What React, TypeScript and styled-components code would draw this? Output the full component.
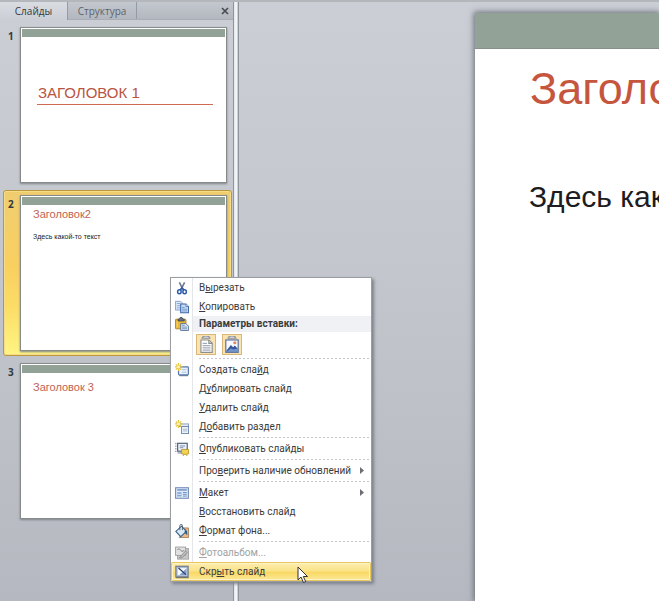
import React from "react";
import styled, { createGlobalStyle } from "styled-components";

const GlobalStyle = createGlobalStyle`
  *, *::before, *::after { box-sizing: border-box; }
  html, body { margin: 0; height: 100%; overflow: hidden; }
  #root { height: 100%; }
  button { font: inherit; color: inherit; margin: 0; padding: 0; border: 0; background: none; text-align: left; }
`;

const UI_FONT = `"Open Sans", "Noto Sans", sans-serif`;
const MENU_FONT = `Roboto, "Noto Sans", sans-serif`;
const SLIDE_FONT = `"Liberation Sans", Arial, sans-serif`;

const Window = styled.div`
  position: relative;
  display: flex;
  min-height: 100vh;
  height: 100vh;
  border-top: 2px solid #b4b8bd;
  background: linear-gradient(#cbced5, #c4c8ce 40%, #b5b8c0);
  font: 10px/14px ${UI_FONT};
  color: #3b3b3b;
  overflow: hidden;
`;

const Sidebar = styled.aside`
  flex: 0 0 233px;
  display: flex;
  flex-direction: column;
`;

const TabBar = styled.div`
  display: flex;
  height: 18px;
  background: linear-gradient(#c3c8cf, #b3b8c0);
  border-bottom: 1px solid #a9aeb6;
`;

const Tab = styled.button<{ $active?: boolean }>`
  width: ${(p) => (p.$active ? 68 : 69)}px;
  height: ${(p) => (p.$active ? 18 : 17)}px;
  text-align: center;
  color: ${(p) => (p.$active ? "#333940" : "#5d636b")};
  background: ${(p) => (p.$active ? "linear-gradient(#d9dde2, #cbced5)" : "none")};
  border-right: 1px solid #959ba4;
`;

const CloseButton = styled.button`
  margin-left: auto;
  width: 17px;
  display: grid;
  place-items: center;
  color: #484d54;
`;

const SlideList = styled.ol`
  list-style: none;
  margin: 0;
  padding: 2px 1px 0 3px;
  display: flex;
  flex-direction: column;
  gap: 2px;
`;

const SlideRow = styled.li<{ $selected?: boolean }>`
  display: flex;
  padding: 4px 4px 4px 0;
  border: 1px solid ${(p) => (p.$selected ? "#bd9740" : "transparent")};
  border-radius: 3px;
  background: ${(p) =>
    p.$selected ? "linear-gradient(#efcd70, #f9cf60 45%, #fbdc66 70%, #fff582)" : "none"};
  box-shadow: ${(p) => (p.$selected ? "inset 0 0 0 1px #f7dc88" : "none")};
`;

const SlideNumber = styled.span`
  flex: 0 0 16px;
  padding: 2px 0 0 4px;
  font-weight: 700;
  color: #333940;
`;

const Thumb = styled.div`
  flex: 1;
  height: 156px;
  padding: 1px;
  background: #fff;
  border: 1px solid #878b88;
  box-shadow: 0 1px 2px #7f848b;
`;

const ThumbBand = styled.div`
  height: 8px;
  background: #92a297;
`;

const ThumbTitle = styled.div`
  margin: 46px 12px 0 15px;
  padding: 0 0 1px 1px;
  font: 15px/20px ${SLIDE_FONT};
  color: #b9543f;
  border-bottom: 1px solid #cf6a55;
`;

const ThumbHeading = styled.div<{ $low?: boolean }>`
  margin: ${(p) => (p.$low ? 7 : 2)}px 11px 0;
  font: 11px/14px ${SLIDE_FONT};
  color: #c06352;
`;

const ThumbText = styled.div`
  margin: 12px 11px 0;
  font: 7px/8px ${SLIDE_FONT};
  color: #222;
`;

const Splitter = styled.div`
  flex: 0 0 6px;
  border: solid #8f959d;
  border-width: 0 1px;
  background: linear-gradient(90deg, #e3e6e9, #f7f8f9 60%, #b9bdc3);
`;

const Workspace = styled.main`
  flex: 1;
  min-width: 0;
  display: flex;
  padding: 11px 0 0 236px;
`;

const Slide = styled.section`
  flex: 1;
  min-width: 0;
  background: #fff;
  box-shadow: 0 0 6px 1px #656b73;
  font-family: ${SLIDE_FONT};
  white-space: nowrap;
`;

const SlideBand = styled.div`
  height: 36px;
  background: #92a297;
  border-bottom: 1px solid #869289;
`;

const SlideTitle = styled.h1`
  margin: 14px 0 0 55px;
  font-size: 45px;
  line-height: 52px;
  font-weight: 400;
  color: #c6553e;
`;

const SlideBody = styled.p`
  margin: 64px 0 0 54px;
  font-size: 30px;
  line-height: 36px;
  color: #1d1c20;
`;

const Menu = styled.div`
  position: absolute;
  left: 170px;
  top: 275px;
  width: 202px;
  border: 1px solid #9a9da2;
  background: linear-gradient(90deg, #fff 21px, #e4e6e9 21px, #e4e6e9 22px, #fff 22px);
  box-shadow: 2px 2px 3px #7d818a;
  font-family: ${MENU_FONT};
`;

const MenuItem = styled.button<{ $hot?: boolean }>`
  display: grid;
  grid-template-columns: 28px 1fr 11px;
  align-items: center;
  width: 100%;
  height: 19px;
  color: #3b3b3b;
  white-space: nowrap;
  border-radius: 2px;
  background: ${(p) => (p.$hot ? "linear-gradient(#fdefb5, #fbe389 45%, #f9d965 55%, #fdea9c)" : "none")};
  box-shadow: ${(p) => (p.$hot ? "inset 0 0 0 1px #e8c65c, inset 0 0 0 2px #fdf3c6" : "none")};
  &:disabled { color: #a2a2a2; }
  u { text-underline-offset: 1px; text-decoration-thickness: 1px; text-decoration-skip-ink: none; }
`;

const IconCell = styled.span`
  display: grid;
  width: 21px;
  place-items: center;
`;

const MenuHeader = styled.div`
  display: grid;
  grid-template-columns: 22px 1fr;
  height: 16px;
  align-items: center;
`;

const HeaderText = styled.span`
  padding-left: 6px;
  line-height: 16px;
  font-weight: 700;
  background: #eff1f5;
`;

const PasteOptions = styled.div`
  display: flex;
  gap: 6px;
  height: 25px;
  padding: 2px 0 0 25px;
`;

const PasteButton = styled.button`
  width: 20px;
  height: 21px;
  display: grid;
  place-items: center;
  background: #fae3af;
  border: 1px solid #d9b779;
`;

const Separator = styled.hr`
  height: 3px;
  margin: 0 0 0 28px;
  border: 0;
  background: repeating-linear-gradient(90deg, #c5c7ca 0 2px, transparent 2px 4px) 0 1px / 100% 1px no-repeat;
`;

const Pointer = styled.svg`
  position: absolute;
  left: 297px;
  top: 564px;
`;

const Glyph = ({ children, size = 14 }: { children: React.ReactNode; size?: number }) => (
  <svg width={size} height={size} viewBox="0 0 16 16" fill="none" aria-hidden="true">
    {children}
  </svg>
);

const star = (
  <g>
    <path d="M4 0v9M-.5 4.500h9M1 1.500l6 6M7 1.500l-6 6" stroke="#e4c33b" strokeWidth="1.300" />
    <circle cx="4" cy="4.500" r="1.700" fill="#fff6b0" />
  </g>
);

const icons: Record<string, React.ReactNode> = {
  cut: (
    <Glyph>
      <path d="M5 1.500l4.500 9M11 1.500l-4.500 9" stroke="#6b7890" strokeWidth="1.800" />
      <ellipse cx="5" cy="12.300" rx="2" ry="2.300" stroke="#2d59a8" strokeWidth="1.700" />
      <ellipse cx="11" cy="12.300" rx="2" ry="2.300" stroke="#2d59a8" strokeWidth="1.700" />
      <path d="M6 10l2-2.500 2 2.500" stroke="#2d59a8" strokeWidth="1.600" />
    </Glyph>
  ),
  copy: (
    <Glyph>
      <path d="M.5 1.500h6l2 2v8h-8z" fill="#dce9f8" stroke="#7c9acb" />
      <path d="M2 4h4M2 6.500h4M2 9h4" stroke="#7fa1d5" />
      <path d="M6.500 4.500h6l3 3v7h-9z" fill="#c6dcf5" stroke="#3f65a5" strokeWidth="1.200" />
      <path d="M12.500 4.500v3h3" fill="#fff" stroke="#4c70ad" />
      <path d="M8 8.500h3M8 10.500h6M8 12.500h6" stroke="#6d92cb" />
    </Glyph>
  ),
  paste: (
    <Glyph>
      <rect x=".5" y="2.500" width="12" height="11" rx="1" fill="#e7b83c" stroke="#a67a20" />
      <path d="M3.500 4.500v-2h1.500l1-2h2l1 2h1.500v2z" fill="#68717f" stroke="#414a57" />
      <path d="M2.500 5v7" stroke="#f7dc80" />
      <path d="M6.500 7.500h6l3 3v5h-9z" fill="#dce8f6" stroke="#52698f" />
      <path d="M8 11.500h6M8 13.500h6M8 9.500h3" stroke="#6e8cb7" />
    </Glyph>
  ),
  newSlide: (
    <Glyph>
      <rect x="4" y="4.500" width="11.300" height="9" rx="1" fill="#e9f1fa" stroke="#5476ad" strokeWidth="1.300" />
      <path d="M8 7.500h5M8 10.500h5" stroke="#a9c0df" />
      <path d="M5 14.500h10" stroke="#4b648b" />
      {star}
    </Glyph>
  ),
  section: (
    <Glyph>
      <rect x="4.500" y="4.500" width="11" height="3" fill="#e7edf5" stroke="#8095b5" />
      <rect x="7.500" y="7.500" width="8" height="8" fill="#eff4fa" stroke="#6680aa" />
      <path d="M9 10.500h5M9 12.500h5" stroke="#9db1cf" />
      {star}
    </Glyph>
  ),
  publish: (
    <Glyph>
      <path d="M1 1v12" stroke="#59616e" strokeDasharray="1.500 1.500" />
      <rect x="3" y="1.500" width="11" height="9" fill="#edf2f9" stroke="#59677e" strokeWidth="1.400" />
      <path d="M5.500 4.500h6M5.500 6.500h4" stroke="#6d83ab" />
      <path d="M3 12.500h5" stroke="#59677e" />
      <path d="M7.500 8.500h8v5h-2v2l-2-2-2 2v-2h-2z" fill="#f3d451" stroke="#b89627" />
    </Glyph>
  ),
  layout: (
    <Glyph>
      <rect x=".7" y="2" width="14.600" height="12" fill="#e3edf9" stroke="#6d87b3" strokeWidth="1.200" />
      <path d="M2.500 4.500h11" stroke="#5f83bf" strokeWidth="1.500" />
      <rect x="2.500" y="7" width="5" height="5" fill="#86a7da" />
      <path d="M9 7.500h4.500M9 9.500h4.500M9 11.500h4.500" stroke="#5f83bf" />
      <path d="M2.500 9.500h5" stroke="#e3edf9" />
    </Glyph>
  ),
  format: (
    <Glyph>
      <path d="M8 4.500h7.500v11H4.500" fill="#edb987" stroke="#9e7b5a" />
      <path d="M1 8.500l6.500-6 5.500 6-6.500 6z" fill="#d9eaf7" stroke="#3e6588" strokeWidth="1.200" />
      <path d="M5.500 7V2q0-1.500 1.500-1.500T8.500 2v5" stroke="#4b5968" />
      <path d="M11 6q3 1 2.500 6-2-1-2-4" fill="#2e6fb0" stroke="#28598b" />
    </Glyph>
  ),
  album: (
    <Glyph>
      <rect x="3" y="3" width="12.500" height="12" fill="#c8c8c8" stroke="#a0a0a0" />
      <rect x=".7" y="1.200" width="11.500" height="9.500" fill="#e2e2e2" stroke="#999" />
      <path d="M2.500 4q3-2 4 1t4 0M5 13.500l7-8 2 2-6 6z" fill="#bababa" stroke="#8f8f8f" />
    </Glyph>
  ),
  hide: (
    <Glyph>
      <rect x="1" y="1.500" width="14" height="12" fill="#a9bcd8" stroke="#7a8290" strokeWidth="1.500" />
      <rect x="3" y="3.500" width="10" height="8" fill="#f5f8fc" />
      <path d="M13 4v7.500H5z" fill="#7f9dcb" />
      <path d="M4 3.500l8.500 7.500" stroke="#27406b" strokeWidth="1.500" />
      <path d="M1 14.500h14.500" stroke="#4e5a6c" />
    </Glyph>
  ),
  pasteTheme: (
    <Glyph size={18}>
      <path d="M4.500 2Q5 0 8 0t3.500 2z" fill="#dfe3e8" stroke="#8d949d" />
      <path d="M3.500 3.500h7l3 3v8h-10z" fill="#fff" stroke="#8b8e91" />
      <path d="M10.500 3.500v3h3" stroke="#8b8e91" />
      <path d="M5 6.500h4M5 8.500h7M5 10.500h7M5 12.500h7" stroke="#a3abb8" />
    </Glyph>
  ),
  pastePicture: (
    <Glyph size={18}>
      <path d="M4.500 2Q5 0 8 0t3.500 2z" fill="#dfe3e8" stroke="#8d949d" />
      <rect x="2.500" y="3.500" width="11" height="11" fill="#f7fbff" stroke="#53699a" />
      <path d="M3 13l4-5 2 2 1.500-1.500L13 11v3H3z" fill="#36589a" />
      <path d="M3 14l4-3 2 1 4-1v3z" fill="#7597ca" />
      <circle cx="10.500" cy="6" r="1.400" fill="#e38a62" />
    </Glyph>
  ),
};

interface ItemProps {
  icon?: string;
  label: [string, string, string];
  submenu?: boolean;
  hot?: boolean;
  disabled?: boolean;
}

const Item = ({ icon, label, submenu, hot, disabled }: ItemProps) => (
  <MenuItem role="menuitem" $hot={hot} disabled={disabled} aria-haspopup={submenu ? "menu" : undefined}>
    <IconCell>{icon && icons[icon]}</IconCell>
    <span>
      {label[0]}
      <u>{label[1]}</u>
      {label[2]}
    </span>
    {submenu && (
      <svg width="5" height="7" viewBox="0 0 5 7" aria-hidden="true">
        <path d="M0 0l4 3.500L0 7z" fill="#6b6e73" />
      </svg>
    )}
  </MenuItem>
);

export default function App() {
  return (
    <>
      <GlobalStyle />
      <Window>
        <Sidebar>
          <TabBar role="tablist">
            <Tab role="tab" aria-selected="true" $active>Слайды</Tab>
            <Tab role="tab" aria-selected="false">Структура</Tab>
            <CloseButton aria-label="Закрыть">
              <svg width="8" height="8" viewBox="0 0 8 8" aria-hidden="true">
                <path d="M1 1l6 6M7 1L1 7" stroke="currentColor" strokeWidth="1.700" />
              </svg>
            </CloseButton>
          </TabBar>
          <SlideList>
            <SlideRow>
              <SlideNumber>1</SlideNumber>
              <Thumb>
                <ThumbBand />
                <ThumbTitle>ЗАГОЛОВОК 1</ThumbTitle>
              </Thumb>
            </SlideRow>
            <SlideRow $selected>
              <SlideNumber>2</SlideNumber>
              <Thumb>
                <ThumbBand />
                <ThumbHeading>Заголовок2</ThumbHeading>
                <ThumbText>Здесь какой-то текст</ThumbText>
              </Thumb>
            </SlideRow>
            <SlideRow>
              <SlideNumber>3</SlideNumber>
              <Thumb>
                <ThumbBand />
                <ThumbHeading $low>Заголовок 3</ThumbHeading>
              </Thumb>
            </SlideRow>
          </SlideList>
        </Sidebar>
        <Splitter />
        <Workspace>
          <Slide>
            <SlideBand />
            <SlideTitle>Заголовок2</SlideTitle>
            <SlideBody>Здесь какой-то текст</SlideBody>
          </Slide>
        </Workspace>

        <Menu role="menu">
          <Item icon="cut" label={["В", "ы", "резать"]} />
          <Item icon="copy" label={["", "К", "опировать"]} />
          <MenuHeader>
            <IconCell>{icons.paste}</IconCell>
            <HeaderText>Параметры вставки:</HeaderText>
          </MenuHeader>
          <PasteOptions>
            <PasteButton aria-label="Использовать конечную тему">{icons.pasteTheme}</PasteButton>
            <PasteButton aria-label="Рисунок">{icons.pastePicture}</PasteButton>
          </PasteOptions>
          <Separator />
          <Item icon="newSlide" label={["Создать сла", "й", "д"]} />
          <Item label={["Д", "у", "блировать слайд"]} />
          <Item label={["", "У", "далить слайд"]} />
          <Item icon="section" label={["Д", "о", "бавить раздел"]} />
          <Separator />
          <Item icon="publish" label={["", "О", "публиковать слайды"]} />
          <Separator />
          <Item label={["Про", "в", "ерить наличие обновлений"]} submenu />
          <Separator />
          <Item icon="layout" label={["", "М", "акет"]} submenu />
          <Item label={["", "В", "осстановить слайд"]} />
          <Item icon="format" label={["", "Ф", "ормат фона..."]} />
          <Separator />
          <Item icon="album" label={["", "Ф", "отоальбом..."]} disabled />
          <Item icon="hide" label={["Скр", "ы", "ть слайд"]} hot />
        </Menu>
        <Pointer width="12" height="18" viewBox="0 0 12 18" aria-hidden="true">
          <path d="M1 1v13l3-3 2.500 5.500 2.200-1L6.300 10.500h4.200z" fill="#fff" stroke="#333" strokeWidth="1" />
        </Pointer>
      </Window>
    </>
  );
}
